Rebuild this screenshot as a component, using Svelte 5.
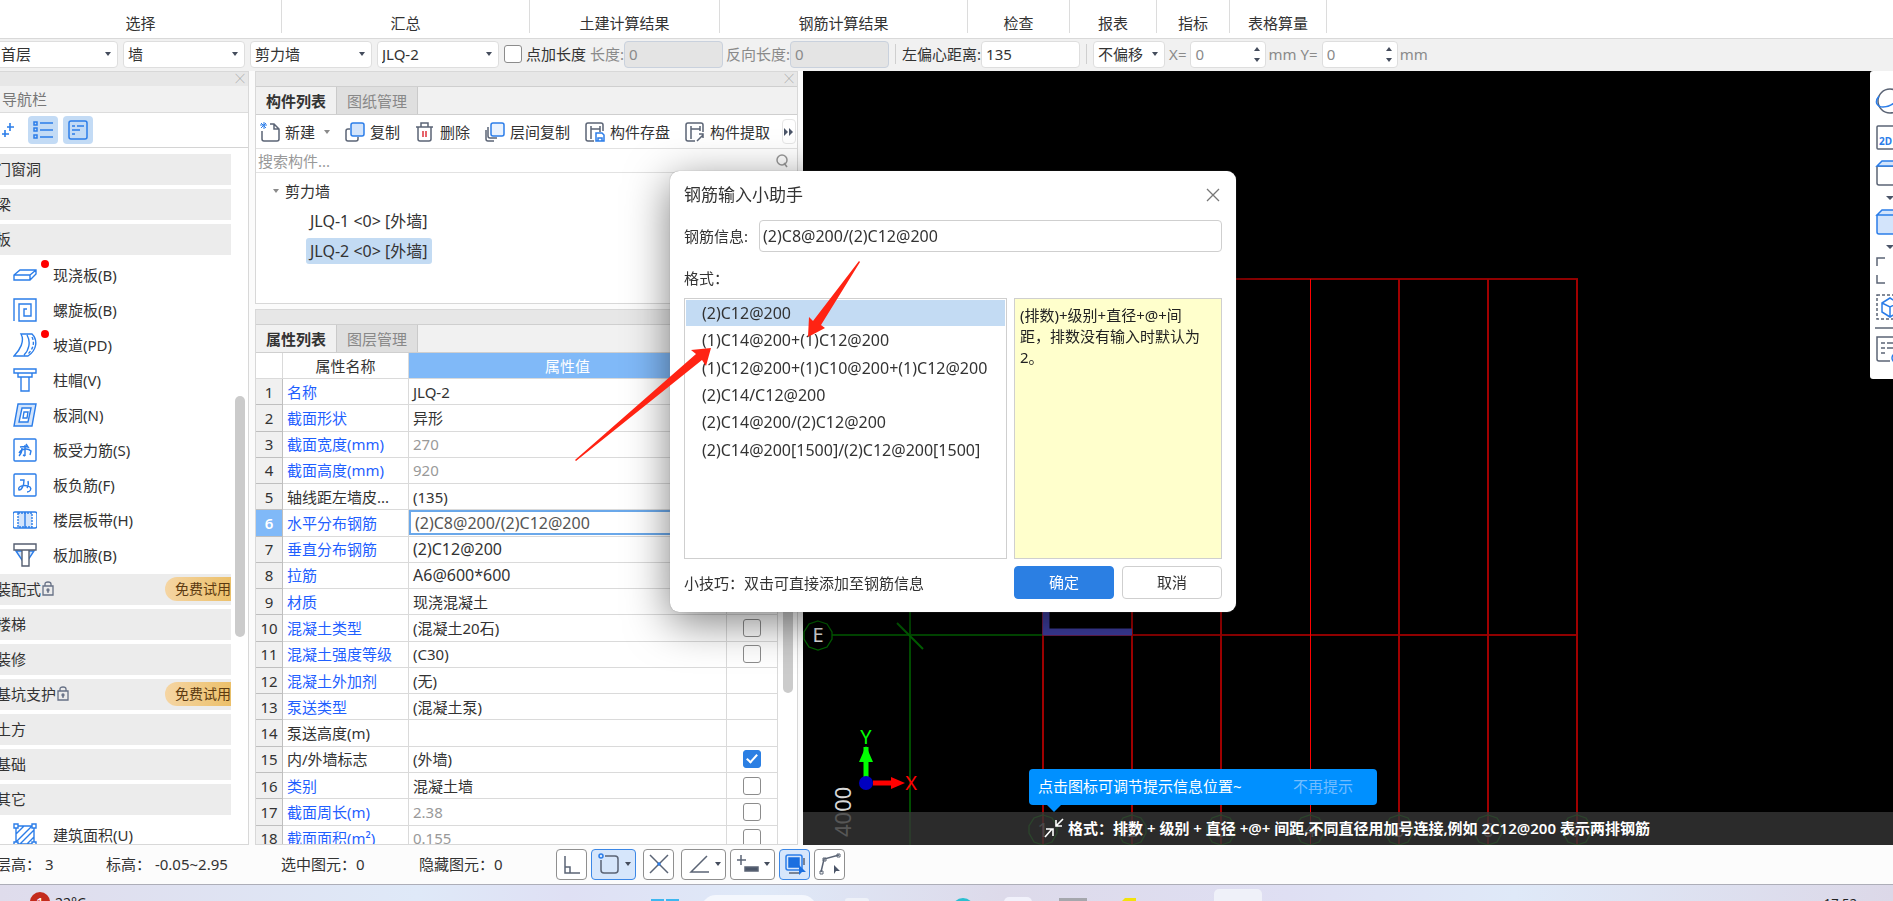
<script lang="ts">
  const ribbonGroups = [
    { label: '选择', width: 282 },
    { label: '汇总', width: 248 },
    { label: '土建计算结果', width: 190 },
    { label: '钢筋计算结果', width: 248 },
    { label: '检查', width: 102 },
    { label: '报表', width: 87 },
    { label: '指标', width: 73 },
    { label: '表格算量', width: 97 },
  ]

  const selects = [
    { name: '楼层', value: '首层' },
    { name: '构件大类', value: '墙' },
    { name: '构件类型', value: '剪力墙' },
    { name: '构件', value: 'JLQ-2' },
  ]

  // 24x24 drawings for the navigation list
  const navIcons: Record<string, string> = {
    slab: '<path d="M1 12l6-5h16v4l-6 6H1zM1 12h16v5M17 12l6-5"/>',
    spiral: '<path d="M1 23V1h22v22H6V6h12v12h-7v-7h3"/>',
    ramp: '<path d="M8 1c4 7-1 16-7 22h14c9-6 10-16 4-22zM8 1h11M14 2c4 7 2 15-3 20"/><path d="M19 4c3 6 1 12-4 17" stroke-dasharray="3 2"/>',
    cap: '<path d="M1 1h22v4H1zM5 5h14v4H5zM8 9h8v14H8z"/>',
    hole: '<path d="M5 1h18l-4 22H1z" fill="#d3e4fb"/><path d="M9 5h9l-3 14H6z" fill="#fff"/><path d="M11 9h4l-1 6h-4z"/>',
    rebar: '<rect x="1" y="1" width="22" height="22" rx="1"/><path d="M7 9q5-1 8 0l-2-3M6 15c3-5 9-5 12-2l-1 4M12 7v11M9 10c0 4-1 6-3 8M12 18l-2-1"/>',
    negative: '<rect x="1" y="1" width="22" height="22" rx="1"/><path d="M7 7h4c0 5-2 10-5 10-2-4 6-6 11-3 2 2 0 5-3 5M15 8q1 4-1 7"/>',
    band: '<rect x="0" y="4" width="24" height="16" rx="2"/><path d="M5 5h14v14H5z" fill="#d3e4fb" stroke-dasharray="2 1"/><path d="M12 4v16"/>',
    haunch: '<path d="M3 8l6 9h6l6-9z" fill="#d3e4fb"/><path d="M1 1h22v6H1zM9 7h7v16H9z" stroke="#555e70" fill="#fff"/>',
    area: '<path d="M3 3h18v18H3zM3 11l8-8M3 19L19 3M7 21L21 7M14 21l7-7"/><path d="M1 1h4v4H1zM19 1h4v4h-4zM1 19h4v4H1zM19 19h4v4h-4z" fill="#fff"/>',
  }

  const nav = [
    { group: '门窗洞' },
    { group: '梁' },
    { group: '板' },
    { item: '现浇板(B)', icon: 'slab', dot: true },
    { item: '螺旋板(B)', icon: 'spiral' },
    { item: '坡道(PD)', icon: 'ramp', dot: true },
    { item: '柱帽(V)', icon: 'cap' },
    { item: '板洞(N)', icon: 'hole' },
    { item: '板受力筋(S)', icon: 'rebar' },
    { item: '板负筋(F)', icon: 'negative' },
    { item: '楼层板带(H)', icon: 'band' },
    { item: '板加腋(B)', icon: 'haunch' },
    { group: '装配式', locked: true },
    { group: '楼梯' },
    { group: '装修' },
    { group: '基坑支护', locked: true },
    { group: '土方' },
    { group: '基础' },
    { group: '其它' },
    { item: '建筑面积(U)', icon: 'area' },
  ]

  // 20x20 drawings for the component list toolbar
  const tools = [
    { label: '新建', menu: true, icon: '<path d="M10 2h4l5 5v10q0 2-2 2H4q-2 0-2-2V9M14 2v5h5"/><path d="M4 0v7M0 3h7M1 1l5 5M6 1L1 6" stroke="#2b7de9" stroke-width="1"/>' },
    { label: '复制', icon: '<path d="M5 7H3Q1 7 1 9v8q0 2 2 2h8q2 0 2-2v-2"/><rect x="6" y="1" width="13" height="13" rx="2" stroke="#2b7de9" fill="#d3e4fb"/>' },
    { label: '删除', icon: '<path d="M1 5h17M6 5V1h7v4M3 5v12q0 2 2 2h9q2 0 2-2V5"/><path d="M8 9v6M11 9v6" stroke="#e0303a"/>' },
    { label: '层间复制', icon: '<path d="M1 8v9q0 2 2 2h6M3 5v9q0 2 2 2h7"/><rect x="6" y="1" width="13" height="13" rx="2" stroke="#2b7de9" fill="#e9f2fe"/>' },
    { label: '构件存盘', icon: '<path d="M9 19H3q-2 0-2-2V3q0-2 2-2h13q2 0 2 2v6M6 4v13M6 7h9M15 4v6"/><path d="M11 11h6l2 2v6h-8zM13 19v-3h4v3" stroke="#2b7de9"/>' },
    { label: '构件提取', icon: '<path d="M10 19H3q-2 0-2-2V3q0-2 2-2h13q2 0 2 2v7M6 4v13M6 7h9M15 4v5M12 19l6-6M14 12h4v4"/>' },
  ]

  const properties = [
    { name: '名称', value: 'JLQ-2', link: true },
    { name: '截面形状', value: '异形', link: true },
    { name: '截面宽度(mm)', value: '270', link: true, dim: true },
    { name: '截面高度(mm)', value: '920', link: true, dim: true },
    { name: '轴线距左墙皮...', value: '(135)' },
    { name: '水平分布钢筋', value: '(2)C8@200/(2)C12@200', link: true, editing: true },
    { name: '垂直分布钢筋', value: '(2)C12@200', link: true, code: true },
    { name: '拉筋', value: 'A6@600*600', link: true, code: true },
    { name: '材质', value: '现浇混凝土', link: true },
    { name: '混凝土类型', value: '(混凝土20石)', link: true, check: false },
    { name: '混凝土强度等级', value: '(C30)', link: true, check: false },
    { name: '混凝土外加剂', value: '(无)', link: true },
    { name: '泵送类型', value: '(混凝土泵)', link: true },
    { name: '泵送高度(m)', value: '' },
    { name: '内/外墙标志', value: '(外墙)', check: true },
    { name: '类别', value: '混凝土墙', link: true, check: false },
    { name: '截面周长(m)', value: '2.38', link: true, dim: true, check: false },
    { name: '截面面积(m²)', value: '0.155', link: true, dim: true, check: false },
  ]

  const gridLines = [240, 329, 418, 507, 596, 685, 774]

  const formats = [
    '(2)C12@200',
    '(1)C14@200+(1)C12@200',
    '(1)C12@200+(1)C10@200+(1)C12@200',
    '(2)C14/C12@200',
    '(2)C14@200/(2)C12@200',
    '(2)C14@200[1500]/(2)C12@200[1500]',
  ]

  const statusButtons = [
    { name: '正交', icon: '<path d="M5 4v17h15M5 15h5v6"/>' },
    { name: '对象捕捉', menu: true, active: true, spaced: true, icon: '<path d="M8 4h10q3 0 3 3v11q0 3-3 3H7q-3 0-3-3V8"/><circle cx="4" cy="4" r="2" stroke="#2b7de9"/>' },
    { name: '交点', spaced: true, icon: '<path d="M3 3l18 18M21 3L3 21"/><circle cx="12" cy="12" r="1" fill="#2b7de9" stroke="#2b7de9"/>' },
    { name: '角度', menu: true, icon: '<path d="M20 4L4 20h18M10 14l3-3"/>' },
    { name: '动态输入', menu: true, icon: '<path d="M1 8h9M5 3v10"/><rect x="9" y="15" width="13" height="4" fill="#4b5568"/>' },
    { name: '选择', active: true, icon: '<rect x="3" y="3" width="16" height="15" rx="2" stroke="#2b7de9"/><rect x="6" y="6" width="10" height="9" fill="#1a6fe0" stroke="#1a6fe0"/><path d="M6 21h10M21 6v7" /><path d="M16 13l7 7h-4l-3 3z" fill="#1a6fe0" stroke="none"/>' },
    { name: '折线选择', icon: '<path d="M3 20l3-13L21 3"/><path d="M2 19h3v3H2zM5 6h3v3H5zM19 2h3v3h-3z" stroke-width="1"/><path d="M16 13l6 6h-4l-2 3z" fill="#4b5568" stroke="none"/>' },
  ]

  let rebar = '(2)C8@200/(2)C12@200'
  let selected = 0
  let open = true
</script>

<div class="app">
  <header class="ribbon">
    {#each ribbonGroups as g}
      <div class="ribbon-group" style:width="{g.width}px">{g.label}</div>
    {/each}
  </header>

  <div class="options">
    {#each selects as s}
      <span class="picker">
        <select aria-label={s.name}><option>{s.value}</option></select>
        <i class="caret"></i>
      </span>
    {/each}
    <label class="tick"><input type="checkbox" />点加长度</label>
    <label class="field off">长度:<input value="0" disabled /></label>
    <label class="field off">反向长度:<input value="0" disabled /></label>
    <i class="divider"></i>
    <label class="field">左偏心距离:<input value="135" /></label>
    <i class="divider"></i>
    <span class="picker small">
      <select aria-label="偏移方式"><option>不偏移</option></select>
      <i class="caret"></i>
    </span>
    {#each ['X=', 'Y='] as axis}
      <label class="field spin">{axis}<span><input value="0" /><i class="up"></i><i class="down"></i></span>mm</label>
    {/each}
  </div>

  <main>
    <aside class="panel nav">
      <div class="strip"><button class="close" aria-label="关闭导航栏">╳</button></div>
      <div class="title">导航栏</div>
      <div class="nav-tools">
        <svg width="18" height="20" viewBox="0 0 18 20" stroke="#2b7de9" stroke-width="1.6" fill="none">
          <path d="M7 7h7M10 3v8M2 14h7M5 10v7" />
        </svg>
        <button aria-label="列表视图">
          <svg width="20" height="20" viewBox="0 0 20 20" stroke="#2b7de9" stroke-width="1.5" fill="none">
            <path d="M7 3h13M7 10h13M7 17h13M1 2h3v3H1zM1 8h3v3H1zM1 15h3v3H1z" />
          </svg>
        </button>
        <button aria-label="详细视图">
          <svg width="20" height="20" viewBox="0 0 20 20" stroke="#2b7de9" stroke-width="1.5" fill="none">
            <rect x="1" y="1" width="18" height="18" rx="2" />
            <path d="M4 6h3M9 6h7M4 10h8M4 14h3" />
          </svg>
        </button>
      </div>
      <div class="nav-list">
        {#each nav as n}
          {#if n.group}
            <button class="group">
              {n.group}
              {#if n.locked}
                <svg width="12" height="15" viewBox="0 0 12 15" stroke="#667085" stroke-width="1.3" fill="none">
                  <path d="M1 5h10v9H1zM3 5V3q0-2 3-2t3 2v2M6 9v3" /><circle cx="6" cy="9" r="1" />
                </svg>
                <span class="trial">免费试用</span>
              {/if}
            </button>
          {:else}
            <button class="item">
              <svg class="line" width="24" height="24" viewBox="0 0 24 24">{@html navIcons[n.icon ?? '']}</svg>
              {#if n.dot}<i class="dot"></i>{/if}
              {n.item}
            </button>
          {/if}
        {/each}
        <i class="thumb"></i>
      </div>
    </aside>

    <div class="middle">
      <section class="panel">
        <div class="strip"><button class="close" aria-label="关闭构件列表">╳</button></div>
        <div class="tabs">
          <button class="on">构件列表</button><button>图纸管理</button>
        </div>
        <div class="tools">
          {#each tools as t}
            <button>
              <svg class="dark" width="20" height="20" viewBox="0 0 20 20">{@html t.icon}</svg>
              {t.label}
              {#if t.menu}<i class="caret light"></i>{/if}
            </button>
          {/each}
          <button class="more" aria-label="更多">
            <svg width="10" height="8" viewBox="0 0 10 8" fill="#4b5568"><path d="M0 0l4 4-4 4zM5 0l4 4-4 4z" /></svg>
          </button>
        </div>
        <div class="search">
          <input placeholder="搜索构件..." aria-label="搜索构件" />
          <svg width="14" height="14" viewBox="0 0 14 14" fill="none" stroke="#999" stroke-width="1.5">
            <circle cx="7" cy="6" r="5" /><path d="M9 9l3 4" />
          </svg>
        </div>
        <div class="tree">
          <div class="root"><i class="caret light"></i>剪力墙</div>
          <button>JLQ-1 &lt;0&gt; [外墙]</button>
          <button class="on">JLQ-2 &lt;0&gt; [外墙]</button>
        </div>
      </section>

      <section class="panel props">
        <div class="strip"></div>
        <div class="tabs">
          <button class="on">属性列表</button><button>图层管理</button>
        </div>
        <div class="props-body">
          <table>
            <thead>
              <tr><th class="num"></th><th class="name">属性名称</th><th class="val">属性值</th><th class="chk"></th></tr>
            </thead>
            <tbody>
              {#each properties as p, i}
                <tr class:editing={p.editing}>
                  <th class="num">{i + 1}</th>
                  <td class:link={p.link}>{p.name}</td>
                  <td class:dim={p.dim} class:code={p.code}>
                    {#if p.editing}
                      <input class="edit" aria-label={p.name} bind:value={rebar} />
                    {:else}
                      {p.value}
                    {/if}
                  </td>
                  <td class="chk">
                    {#if p.check !== undefined}
                      <input type="checkbox" aria-label={p.name} checked={p.check} />
                    {/if}
                  </td>
                </tr>
              {/each}
            </tbody>
          </table>
          <i class="thumb"></i>
        </div>
      </section>
    </div>

    <section class="canvas">
      <svg class="drawing" width="100%" height="100%" fill="none">
        <g stroke="#004d00" stroke-width="2">
          <path d="M107 440V774M15 564H240" />
          <path d="M94 552l26 26" stroke="#006400" />
        </g>
        <path d="M240 564H775M240 208H775" stroke="#900000" stroke-width="2" />
        {#each gridLines as x, i}
          <line x1={x} x2={x} y1="208" y2="774" stroke={i === 3 ? '#ff0000' : '#a00000'} stroke-width={i === 3 ? 1 : 2} shape-rendering="crispEdges" />
        {/each}
        <path d="M243 400V561H329" stroke="#3d3d9e" stroke-width="7" />
        <path d="M15 550l9 3 5 8v7l-5 8-9 3-9-3-5-8v-7l5-8z" stroke="#006400" fill="#000" stroke-width="1.3" />
        <text x="15" y="571" fill="#e0e0e0" font-size="20" text-anchor="middle">E</text>
        <text transform="translate(48 766) rotate(-90)" fill="#d8d8d8" font-size="22">4000</text>
        <path d="M63 706v-30" stroke="#00ff00" stroke-width="5" />
        <path d="M63 675l7 16H56z" fill="#00ff00" />
        <path d="M70 712h18" stroke="#ff0000" stroke-width="5" />
        <path d="M102 712l-14-6v12z" fill="#ff0000" />
        <circle cx="63" cy="712" r="7" fill="#0000c0" />
        <text x="63" y="673" fill="#00ff00" font-size="20" text-anchor="middle">Y</text>
        <text x="108" y="719" fill="#ff0000" font-size="20" text-anchor="middle">X</text>
        {#each gridLines as x, i}
          <g transform="translate({x} 759)">
            <path d="M0-15l9 3 5 8v7l-5 9-9 3-9-3-5-9v-7l5-8z" stroke="#008000" stroke-width="1.3" />
            <text y="7" fill="#999" font-size="20" text-anchor="middle">{i + 1}</text>
          </g>
        {/each}
      </svg>

      <div class="hint">
        <svg width="20" height="20" viewBox="0 0 20 20" fill="none" stroke="#fff" stroke-width="1.6">
          <path d="M19 1l-7 7M12 2v6h6M1 19l7-8M2 11h7v7" />
        </svg>
        <span>格式：排数 + 级别 + 直径 +@+ 间距,不同直径用加号连接,例如 2C12@200 表示两排钢筋</span>
      </div>
      <div class="tip">点击图标可调节提示信息位置~<button>不再提示</button></div>

      <div class="views">
        <svg class="dark" width="24" height="308" viewBox="0 0 24 308">
          <ellipse cx="20" cy="30" rx="12" ry="12" />
          <path d="M9 25c-5 6-2 11 4 11q7 0 12-5" stroke="#2b7de9" />
          <rect x="7" y="55" width="24" height="23" rx="1" />
          <path d="M7 95h24M7 95v17q0 2 2 2h22" />
          <path d="M7 95l5-5h19v5z" fill="#d3e4fb" stroke="#2b7de9" />
          <path d="M7 144h24v19H9q-2 0-2-2zM7 144l5-5h19v5z" fill="#d3e4fb" stroke="#2b7de9" />
          <path d="M16 125h8l-4 4zM16 174h8l-4 4z" fill="#4b5568" stroke="none" />
          <path d="M15 187H7v8M7 204v8h8" />
          <rect x="7" y="224" width="24" height="24" stroke-dasharray="3 2" />
          <path d="M12 232l8-5 8 5v9l-8 5-8-5zM12 232l8 4 8-4M20 236v10" stroke="#2b7de9" />
          <path d="M5 257h26" />
          <path d="M20 290H9q-2 0-2-2v-22h24M11 272h4M17 272h9M11 277h4M17 277h9M11 282h4" />
          <circle cx="27" cy="287" r="5" stroke="#2b7de9" />
          <text x="9" y="74" fill="#2b7de9" stroke="none" font-size="10" font-weight="700">2D</text>
        </svg>
      </div>
    </section>
  </main>

  <footer class="status">
    <span class="cell s1">层高： <b>3</b></span>
    <span class="cell s2">标高： <b>-0.05~2.95</b></span>
    <span class="cell s3">选中图元：<b>0</b></span>
    <span class="cell s4">隐藏图元：<b>0</b></span>
    {#each statusButtons as b}
      <button class:active={b.active} class:wide={b.menu} class:spaced={b.spaced} aria-label={b.name}>
        <svg class="dark" width="24" height="24" viewBox="0 0 24 24">{@html b.icon}</svg>
        {#if b.menu}<i class="caret"></i>{/if}
      </button>
    {/each}
  </footer>

  <div class="taskbar">
    <span class="badge">1</span>
    <span class="temp">22°C</span>
    <svg class="dock" width="620" height="16" viewBox="0 0 620 16">
      <path d="M5 14h13v2H5zM20 14h13v2H20z" fill="#3db7f0" />
      <rect x="55" y="10" width="116" height="30" rx="15" fill="#f4f7fd" />
      <rect x="199" y="13" width="24" height="10" rx="3" fill="#eef1f8" />
      <circle cx="317" cy="24" r="11" fill="#2bbfd0" />
      <rect x="358" y="12" width="28" height="10" rx="5" fill="#f1f1fb" />
      <rect x="413" y="13" width="28" height="6" fill="#a5a7ad" />
      <path d="M476 16l3-3h11v3z" fill="#f2e20c" />
      <rect x="568" y="4" width="48" height="30" rx="5" fill="#eff1f9" />
    </svg>
    <span class="clock">17:52</span>
  </div>
</div>

{#if open}
  <div class="dialog" role="dialog" aria-labelledby="dialog-title">
    <div class="dialog-head">
      <span id="dialog-title">钢筋输入小助手</span>
      <button aria-label="关闭" on:click={() => (open = false)}>
        <svg width="14" height="14" viewBox="0 0 14 14" stroke="#777" stroke-width="1.3"><path d="M1 1l12 12M13 1L1 13" /></svg>
      </button>
    </div>
    <label class="info">钢筋信息:<input bind:value={rebar} /></label>
    <div class="format-label">格式：</div>
    <div class="columns">
      <div class="formats">
        {#each formats as f, i}
          <button class:on={selected === i} on:click={() => (selected = i)} on:dblclick={() => (rebar = f)}>{f}</button>
        {/each}
      </div>
      <div class="note">(排数)+级别+直径+@+间距，排数没有输入时默认为2。</div>
    </div>
    <div class="dialog-foot">
      <span>小技巧：双击可直接添加至钢筋信息</span>
      <button class="primary" on:click={() => (open = false)}>确定</button>
      <button on:click={() => (open = false)}>取消</button>
    </div>
  </div>
{/if}

<svg class="marks" width="900" height="500" viewBox="0 0 900 500" fill="#ff2313">
  <path d="M808 337l1-20 4 4 46-60 1 1-39 63 4 3z" />
  <path d="M711 348l-20 2 5 4-121 106 1 1 126-101 4 6z" />
</svg>

<style>
  :global(body) {
    margin: 0;
    overflow: hidden;
  }
  .app,
  .dialog {
    font-family: 'Noto Sans', 'Noto Sans CJK SC', sans-serif;
    font-size: 15px;
    line-height: 20px;
    color: #333;
  }
  .app {
    display: flex;
    flex-direction: column;
    height: 100vh;
    background: #fff;
  }
  button,
  input,
  select {
    box-sizing: border-box;
    margin: 0;
    padding: 0;
    border: 0;
    background: none;
    font: inherit;
    color: inherit;
    outline: none;
  }
  button {
    white-space: nowrap;
    cursor: default;
  }
  i {
    display: block;
    flex: none;
  }
  svg {
    display: block;
    flex: none;
  }
  .line {
    fill: none;
    stroke: #2b7de9;
    stroke-width: 1.4;
  }
  .dark {
    fill: none;
    stroke: #5b6475;
    stroke-width: 1.5;
  }
  .caret {
    width: 0;
    border: 3px solid transparent;
    border-top: 4px solid #444c5c;
    border-bottom: 0;
  }
  .caret.light {
    border-top-color: #8a8a8a;
  }
  input[type='checkbox'] {
    flex: none;
    width: 18px;
    height: 18px;
    border: 1px solid #8c8c8c;
    border-radius: 3px;
    background: #fff;
    appearance: none;
  }
  input[type='checkbox']:checked {
    display: grid;
    place-items: center;
    border-color: #2b7fe3;
    background: #2b7fe3;
  }
  input[type='checkbox']:checked::after {
    content: '';
    width: 4px;
    height: 9px;
    margin-top: -3px;
    border: solid #fff;
    border-width: 0 2px 2px 0;
    transform: rotate(42deg);
  }

  /* ribbon and option bar */
  .ribbon {
    display: flex;
    height: 38px;
    flex: none;
  }
  .ribbon-group {
    box-sizing: border-box;
    height: 33px;
    padding-top: 13px;
    border-right: 1px solid #dcdcdc;
    text-align: center;
    white-space: nowrap;
  }
  .options {
    display: flex;
    align-items: center;
    flex: none;
    box-sizing: border-box;
    height: 33px;
    padding-bottom: 2px;
    border-top: 1px solid #d9d9d9;
    background: #f1f1f1;
    margin-left: -4px;
    white-space: nowrap;
  }
  .picker {
    position: relative;
    margin-right: 5px;
  }
  .picker select {
    width: 122px;
    height: 27px;
    padding: 0 4px;
    border: 1px solid #dedede;
    border-radius: 4px;
    background: #fff;
    appearance: none;
  }
  .picker .caret {
    position: absolute;
    right: 7px;
    top: 11px;
  }
  .picker.small {
    margin-right: 4px;
  }
  .picker.small select {
    width: 72px;
  }
  .tick {
    display: flex;
    align-items: center;
    gap: 4px;
    margin-right: 4px;
  }
  .field {
    display: flex;
    align-items: center;
    margin-right: 3px;
  }
  .field input {
    width: 99px;
    height: 27px;
    padding: 0 4px;
    border: 1px solid #dedede;
    border-radius: 4px;
    background: #fff;
  }
  .off {
    color: #8a8a8a;
  }
  .off input {
    border-color: #c9d1dd;
    background: #e4e4e4;
  }
  .divider {
    width: 1px;
    height: 20px;
    margin: 0 6px 0 3px;
    background: #cfcfcf;
  }
  .field.spin {
    margin-right: 4px;
    color: #8a8a8a;
  }
  .spin span {
    position: relative;
    margin: 0 2px 0 4px;
  }
  .spin input {
    width: 76px;
  }
  .up,
  .down {
    position: absolute;
    right: 6px;
    border: 3px solid transparent;
  }
  .up {
    top: 6px;
    border-top: 0;
    border-bottom: 4px solid #444c5c;
  }
  .down {
    bottom: 6px;
    border-bottom: 0;
    border-top: 4px solid #444c5c;
  }

  /* docked panels */
  main {
    display: grid;
    grid-template-columns: 249px 543px minmax(0, 1fr);
    column-gap: 6px;
    flex: 1;
    min-height: 0;
    background: #fbfbfb;
  }
  .panel {
    box-sizing: border-box;
    display: flex;
    flex-direction: column;
    min-height: 0;
    border: 1px solid #d8d8d8;
    background: #fff;
  }
  .strip {
    display: flex;
    justify-content: flex-end;
    height: 14px;
    flex: none;
    background: #e7e7e7;
  }
  .close {
    width: 16px;
    font-size: 9px;
    line-height: 14px;
    color: #888;
  }
  .nav {
    border-left: 0;
  }
  .title {
    height: 26px;
    flex: none;
    padding-left: 2px;
    border-bottom: 1px solid #dcdcdc;
    background: #f1f1f1;
    line-height: 26px;
    color: #777;
  }
  .nav-tools {
    display: flex;
    align-items: center;
    gap: 5px;
    height: 34px;
    flex: none;
    border-bottom: 1px solid #d4d4d4;
  }
  .nav-tools > svg {
    margin: 0 5px 0 0;
  }
  .nav-tools button {
    display: grid;
    place-items: center;
    width: 30px;
    height: 28px;
    border-radius: 4px;
    background: #c3dbf5;
  }
  .nav-list {
    position: relative;
    flex: 1;
    min-height: 0;
    padding-top: 6px;
    overflow: hidden;
  }
  .group {
    display: flex;
    align-items: center;
    gap: 1px;
    width: 231px;
    height: 31px;
    margin-bottom: 4px;
    padding-bottom: 2px;
    background: #ececec;
    text-indent: -4px;
    text-align: left;
  }
  .trial {
    margin-left: auto;
    padding-left: 10px;
    border-radius: 12px 0 0 12px;
    background: linear-gradient(90deg, #f5d5a3, #ecc06a);
    font-size: 14px;
    line-height: 24px;
    text-indent: 0;
    color: #5c3a10;
  }
  .item {
    position: relative;
    display: flex;
    align-items: center;
    gap: 16px;
    width: 231px;
    height: 35px;
    padding: 0 0 4px 13px;
    text-align: left;
  }
  .dot {
    position: absolute;
    left: 41px;
    top: 1px;
    width: 8px;
    height: 8px;
    border-radius: 50%;
    background: #f00;
  }
  .thumb {
    position: absolute;
    right: 4px;
    width: 10px;
    border-radius: 5px;
    background: #cbcbcb;
  }
  .nav .thumb {
    top: 248px;
    height: 241px;
    right: 3px;
  }
  .middle {
    display: flex;
    flex-direction: column;
    gap: 5px;
    min-height: 0;
  }
  .tabs {
    display: flex;
    height: 27px;
    flex: none;
    border: solid #cfcfcf;
    border-width: 1px 0;
    background: #f1f1f1;
  }
  .tabs button {
    width: 81px;
    border-right: 1px solid #cacaca;
    background: #dfdfdf;
    color: #888;
  }
  .tabs .on {
    background: #f1f1f1;
    font-weight: 600;
    color: #333;
  }
  .tools {
    display: flex;
    align-items: center;
    gap: 15px;
    height: 33px;
    flex: none;
    padding-left: 4px;
    border-bottom: 1px solid #e2e2e2;
  }
  .tools button {
    display: flex;
    align-items: center;
    gap: 5px;
  }
  .tools .caret {
    margin-left: 4px;
  }
  .tools .more {
    justify-content: center;
    width: 14px;
    height: 25px;
    margin-left: -3px;
    border: 1px solid #e6e6e6;
    border-radius: 4px;
  }
  .search {
    display: flex;
    align-items: center;
    height: 23px;
    flex: none;
    padding: 0 8px 0 2px;
    border-bottom: 1px solid #e2e2e2;
  }
  .search input {
    flex: 1;
    height: 22px;
  }
  .search input::placeholder {
    color: #999;
  }
  .tree {
    display: flex;
    flex-direction: column;
    align-items: flex-start;
    gap: 4px;
    height: 125px;
    padding-top: 5px;
  }
  .root {
    display: flex;
    align-items: center;
    gap: 6px;
    height: 26px;
    padding-left: 17px;
  }
  .tree button {
    height: 26px;
    margin-left: 50px;
    padding: 0 4px;
    border-radius: 3px;
    font-size: 16px;
  }
  .tree .on {
    background: #c3dbf3;
  }

  /* property table */
  .props {
    flex: 1;
  }
  .props-body {
    position: relative;
    flex: 1;
    min-height: 0;
    overflow: hidden;
  }
  .props .thumb {
    top: 0;
    height: 340px;
  }
  table {
    width: 522px;
    height: 499px;
    border-collapse: separate;
    border-spacing: 0;
    table-layout: fixed;
  }
  th,
  td {
    box-sizing: border-box;
    height: 26px;
    padding: 0 0 0 4px;
    border: solid #dadada;
    border-width: 0 1px 1px 0;
    font-weight: 400;
    text-align: left;
    white-space: nowrap;
  }
  thead th {
    padding: 0;
    text-align: center;
  }
  .num {
    width: 27px;
    padding: 0;
    text-align: center;
  }
  tbody .num {
    border-color: #bfbfbf;
    background: #f0f0f0;
  }
  .name {
    width: 126px;
  }
  .val {
    background: #80b9f8;
    color: #fff;
  }
  .chk {
    width: 51px;
    padding: 0;
  }
  .chk input {
    margin: 0 auto;
    display: grid;
  }
  .link {
    color: #1f5fff;
  }
  .dim {
    color: #999;
  }
  .code,
  .edit {
    font-size: 16px;
  }
  .editing .num {
    background: #80b9f8;
    font-weight: 600;
    color: #fff;
  }
  .editing td:nth-child(3) {
    padding: 0;
  }
  .edit {
    display: block;
    width: 100%;
    height: 25px;
    padding-left: 4px;
    border: 2px solid #6aa8ea;
    background: #fff;
    color: #555;
  }

  /* drawing area */
  .canvas {
    position: relative;
    overflow: hidden;
    margin-left: -1px;
    background: #000;
  }
  .drawing {
    position: absolute;
    inset: 0;
  }
  .hint {
    position: absolute;
    left: 0;
    right: 0;
    bottom: 0;
    display: flex;
    align-items: center;
    gap: 4px;
    box-sizing: border-box;
    height: 33px;
    padding: 0 0 2px 241px;
    background: rgba(54, 54, 54, 0.8);
    font-weight: 600;
    white-space: nowrap;
    color: #fff;
  }
  .tip {
    position: absolute;
    left: 226px;
    bottom: 40px;
    display: flex;
    align-items: center;
    justify-content: space-between;
    box-sizing: border-box;
    width: 348px;
    height: 36px;
    padding: 0 24px 2px 9px;
    border-radius: 4px;
    background: #0090ff;
    color: #fff;
  }
  .tip::after {
    content: '';
    position: absolute;
    left: 18px;
    top: 36px;
    border: 7px solid transparent;
    border-top-color: #0090ff;
    border-bottom: 0;
  }
  .tip button {
    color: #73bdff;
  }
  .views {
    position: absolute;
    top: 0;
    right: 0;
    width: 23px;
    height: 308px;
    overflow: hidden;
    border-radius: 3px 0 0 3px;
    background: #fff;
  }

  /* status bar and taskbar */
  .status {
    display: flex;
    align-items: center;
    box-sizing: border-box;
    height: 40px;
    flex: none;
    padding-bottom: 1px;
    border-bottom: 1px solid #adaeb8;
    background: #fcfcfc;
  }
  .cell {
    flex: none;
    white-space: nowrap;
  }
  .cell b {
    font-weight: 400;
  }
  .s1 {
    width: 110px;
    margin-left: -4px;
  }
  .s2 {
    width: 175px;
  }
  .s3 {
    width: 138px;
  }
  .s4 {
    width: 137px;
  }
  .status button {
    display: flex;
    align-items: center;
    justify-content: center;
    gap: 4px;
    width: 31px;
    height: 31px;
    margin-right: 4px;
    border: 1px solid #8f8f8f;
    border-radius: 4px;
    background: #fff;
  }
  .status .wide {
    width: 45px;
  }
  .status .spaced {
    margin-right: 7px;
  }
  .status .active {
    border-color: #3b87e6;
    background: #d6e6fb;
  }
  .taskbar {
    display: flex;
    height: 16px;
    flex: none;
    overflow: hidden;
    background: linear-gradient(90deg, #dfdcec, #dfe9f8 22%, #dfe0f4 30%, #dfe9f8 40%, #dddaea 53%, #dfdff3 68%, #dfe9f8 80%, #dcd8e8);
  }
  .badge {
    width: 20px;
    height: 20px;
    margin: 7px 5px 0 30px;
    border-radius: 50%;
    background: #c42b1c;
    line-height: 20px;
    text-align: center;
    color: #fff;
  }
  .temp {
    width: 591px;
    padding-top: 8px;
    font-size: 14px;
    color: #222;
  }
  .clock {
    margin-left: auto;
    padding: 8px 36px 0 0;
    font-size: 13px;
    color: #222;
  }

  /* input helper window */
  .dialog {
    position: fixed;
    left: 670px;
    top: 171px;
    box-sizing: border-box;
    width: 566px;
    padding: 0 14px 13px;
    border-radius: 9px;
    background: #fff;
    box-shadow: 0 0 1px #777, 0 10px 44px rgba(0, 0, 0, 0.5);
  }
  .dialog-head {
    display: flex;
    align-items: center;
    justify-content: space-between;
    box-sizing: border-box;
    height: 49px;
    padding: 0 2px 2px 0;
    font-size: 17px;
  }
  .info {
    display: flex;
    align-items: center;
    gap: 11px;
    white-space: nowrap;
  }
  .info input {
    flex: 1;
    height: 32px;
    padding-left: 3px;
    border: 1px solid #cfcfcf;
    border-radius: 4px;
    font-size: 16px;
  }
  .format-label {
    padding: 16px 0 10px;
  }
  .columns {
    display: grid;
    grid-template-columns: 323px 1fr;
    gap: 7px;
    height: 261px;
  }
  .formats,
  .note {
    border: 1px solid #cfcfcf;
  }
  .formats {
    display: grid;
    grid-template-rows: repeat(6, 1fr);
    align-content: start;
    box-sizing: border-box;
    padding: 1px 1px 94px;
  }
  .formats button {
    align-self: start;
    height: 26px;
    padding-left: 16px;
    font-size: 16px;
    text-align: left;
  }
  .formats .on {
    background: #c3dbf3;
  }
  .note {
    padding: 6px 14px 0 5px;
    background: #ffffcc;
    line-height: 21px;
    color: #222;
  }
  .dialog-foot {
    display: flex;
    align-items: center;
    gap: 8px;
    margin-top: 7px;
  }
  .dialog-foot span {
    flex: 1;
  }
  .dialog-foot button {
    width: 100px;
    height: 33px;
    padding-bottom: 2px;
    border: 1px solid #cfcfcf;
    border-radius: 4px;
  }
  .dialog-foot .primary {
    border-color: #2b7fe3;
    background: #2b7fe3;
    color: #fff;
  }
  .marks {
    position: fixed;
    left: 0;
    top: 0;
    pointer-events: none;
  }
</style>
